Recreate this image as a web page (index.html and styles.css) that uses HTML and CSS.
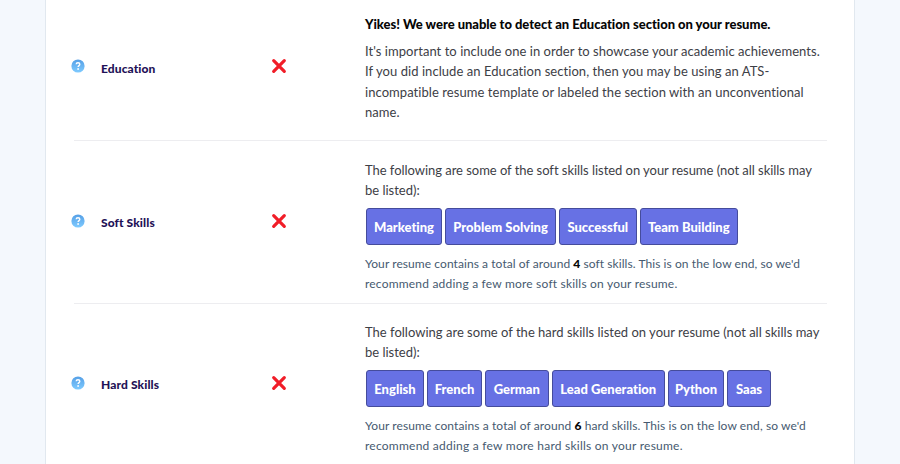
FILE: index.html
```html
<!DOCTYPE html>
<html lang="en">
<head>
<meta charset="utf-8">
<title>Resume report</title>
<link rel="stylesheet" href="styles.css">
</head>
<body>
<svg class="defs" width="0" height="0" aria-hidden="true">
  <defs>
    <linearGradient id="blue" x1="0" y1="0" x2="0" y2="1"><stop offset="0" stop-color="#559fe6"/><stop offset="1" stop-color="#7fcbff"/></linearGradient>
    <symbol id="help" viewBox="0 0 14 14"><circle cx="7" cy="7" r="6.6" fill="url(#blue)"/><path d="M5.2 5.2C5.2 3.2 8.8 3.2 8.8 5.2C8.8 6.6 7.1 6.6 7.1 8.1" fill="none" stroke="#fff" stroke-width="1.4"/><circle cx="7.1" cy="10" r=".9" fill="#fff"/></symbol>
    <symbol id="cross" viewBox="0 0 16 16"><path d="M2.7 2.7L13.3 13.3M13.3 2.7L2.7 13.3" stroke="#f11d28" stroke-width="3.2" stroke-linecap="round"/></symbol>
  </defs>
</svg>
<main class="panel">
  <section class="row row-education">
    <svg class="help"><use href="#help"/></svg>
    <h2 class="label">Education</h2>
    <svg class="cross"><use href="#cross"/></svg>
    <div class="details">
      <h3 class="headline">Yikes! We were unable to detect an Education section on your resume.</h3>
      <p class="body"><span class="e1">It's important to include one in order to showcase your academic achievements.</span><br><span class="e2">If you did include an Education section, then you may be using an ATS-</span><br><span class="e3">incompatible resume template or labeled the section with an unconventional</span><br>name.</p>
    </div>
  </section>
  <section class="row row-soft">
    <svg class="help"><use href="#help"/></svg>
    <h2 class="label">Soft Skills</h2>
    <svg class="cross"><use href="#cross"/></svg>
    <div class="details">
      <p class="intro"><span class="s1">The following are some of the soft skills listed on your resume (not all skills may</span><br>be listed):</p>
      <div class="badges"><span class="badge w-marketing">Marketing</span><span class="badge w-problem">Problem Solving</span><span class="badge w-successful">Successful</span><span class="badge w-team">Team Building</span></div>
      <p class="note"><span class="s2">Your resume contains a total of around <b>4</b> soft skills. This is on the low end, so we'd</span><br><span class="s3">recommend adding a few more soft skills on your resume.</span></p>
    </div>
  </section>
  <section class="row row-hard">
    <svg class="help"><use href="#help"/></svg>
    <h2 class="label">Hard Skills</h2>
    <svg class="cross"><use href="#cross"/></svg>
    <div class="details">
      <p class="intro"><span class="h1">The following are some of the hard skills listed on your resume (not all skills may</span><br>be listed):</p>
      <div class="badges"><span class="badge w-english">English</span><span class="badge w-french">French</span><span class="badge w-german">German</span><span class="badge w-lead">Lead Generation</span><span class="badge w-python">Python</span><span class="badge w-saas">Saas</span></div>
      <p class="note"><span class="h2">Your resume contains a total of around <b>6</b> hard skills. This is on the low end, so we'd</span><br><span class="h3">recommend adding a few more hard skills on your resume.</span></p>
    </div>
  </section>
</main>
</body>
</html>
```
FILE: styles.css
```css
* { box-sizing: border-box; }
body { margin: 0; height: 464px; overflow: hidden; background: #f4f8fd; font-family: Lato, "Liberation Sans", sans-serif; font-size: 13px; font-variant-ligatures: none; }
h2, h3, p { margin: 0; }
.defs { display: block; height: 0; }
.panel { height: 464px; margin: 0 45px; padding: 0 27px 0 28px; overflow: hidden; background: #fff; border: solid #e1e8ef; border-width: 0 1px; }
.row { display: grid; grid-template-columns: 27px 169.5px 94.5px 1fr; align-items: start; border-bottom: 1px solid #ededf0; white-space: nowrap; }
.row-education { height: 141px; padding-top: 14px; }
.row-soft { height: 163px; padding-top: 19px; }
.row-hard { height: 170px; padding-top: 18px; border-bottom: 0; }
.help { width: 14px; height: 14px; margin: 45px 0 0 -3px; }
.label { margin-top: 45px; color: #1f1257; font-size: 12px; line-height: 20px; font-weight: 900; letter-spacing: .1px; }
.cross { width: 16px; height: 16px; margin-top: 44px; }
.row-soft .help { margin-top: 53.5px; }
.row-soft .label { margin-top: 53px; }
.row-soft .cross { margin-top: 52.5px; }
.row-hard .help { margin-top: 53.5px; }
.row-hard .label { margin-top: 53px; }
.row-hard .cross { margin-top: 52.5px; }
.headline { color: #060606; font-size: 13px; line-height: 20px; font-weight: 900; letter-spacing: -.03px; }
.body { margin-top: 7px; color: #3d4046; line-height: 20.4px; letter-spacing: .06px; }
.e1 { letter-spacing: .04px; }
.intro { color: #3d4046; line-height: 20px; letter-spacing: -.01px; }
.s1 { letter-spacing: -.04px; }
.h1 { letter-spacing: .01px; }
.note { margin-top: 9px; color: #465a70; font-size: 12px; line-height: 20px; }
.s2 { letter-spacing: .07px; }
.s3 { letter-spacing: .2px; }
.h2 { letter-spacing: .1px; }
.h3 { letter-spacing: .24px; }
.note b { color: #060606; font-weight: 900; }
.badges { display: flex; gap: 3px; margin: 8px 0 0 1px; }
.badge { display: flex; align-items: center; justify-content: center; height: 37px; border: 1px solid #454c9c; border-radius: 3px; background: #6771e4; color: #fff; font-size: 13px; font-weight: 900; }
.w-marketing { width: 76px; }
.w-problem { width: 111px; }
.w-successful { width: 77.5px; }
.w-team { width: 98.5px; }
.w-english { width: 58px; }
.w-french { width: 55px; }
.w-german { width: 63.5px; }
.w-lead { width: 113.5px; }
.w-python { width: 56px; }
.w-saas { width: 44px; }
```
